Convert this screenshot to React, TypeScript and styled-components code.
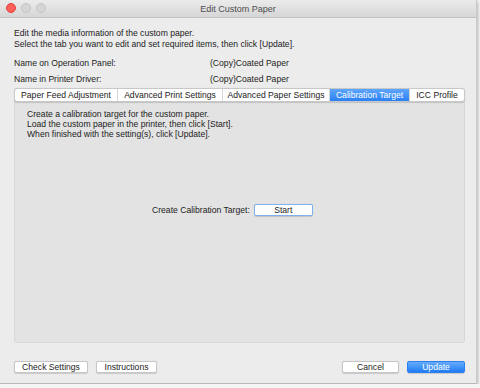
import styled, { createGlobalStyle } from 'styled-components';

const GlobalStyle = createGlobalStyle`
  html, body {
    margin: 0;
    padding: 0;
    background: #f4f4f4;
  }
  body {
    font-family: "Liberation Sans", Arial, sans-serif;
    font-size: 8.6px;
    color: #222;
  }
`;

const tabs = [
  { label: 'Paper Feed Adjustment', width: 102 },
  { label: 'Advanced Print Settings', width: 105 },
  { label: 'Advanced Paper Settings', width: 107 },
  { label: 'Calibration Target', width: 80 },
  { label: 'ICC Profile', width: 55 },
];

export default function App() {
  return (
    <>
      <GlobalStyle />
      <Window>
        <TitleBar>
          <Lights>
            <Light $color="#fc5f57" $border="#e0443e" />
            <Light $color="#d5d5d5" $border="#c4c4c4" />
            <Light $color="#d5d5d5" $border="#c4c4c4" />
          </Lights>
          <Title>Edit Custom Paper</Title>
        </TitleBar>
        <Body>
          <Intro>
            <div>Edit the media information of the custom paper.</div>
            <div>
              Select the tab you want to edit and set required items, then
              click [Update].
            </div>
          </Intro>
          <NameGrid>
            <span>Name on Operation Panel:</span>
            <span>(Copy)Coated Paper</span>
            <span>Name in Printer Driver:</span>
            <span>(Copy)Coated Paper</span>
          </NameGrid>
          <TabArea>
            <TabBar>
              {tabs.map((t) => (
                <Tab
                  key={t.label}
                  $width={t.width}
                  $active={t.label === 'Calibration Target'}
                >
                  {t.label}
                </Tab>
              ))}
            </TabBar>
            <Panel>
              <PanelText>
                <div>Create a calibration target for the custom paper.</div>
                <div>
                  Load the custom paper in the printer, then click [Start].
                </div>
                <div>When finished with the setting(s), click [Update].</div>
              </PanelText>
              <StartRow>
                <span>Create Calibration Target:</span>
                <Button $focus $width={59}>
                  Start
                </Button>
              </StartRow>
            </Panel>
          </TabArea>
          <Footer>
            <ButtonGroup>
              <Button $width={74}>Check Settings</Button>
              <Button $width={61}>Instructions</Button>
            </ButtonGroup>
            <ButtonGroup>
              <Button $width={57}>Cancel</Button>
              <Button $primary $width={58}>
                Update
              </Button>
            </ButtonGroup>
          </Footer>
        </Body>
      </Window>
    </>
  );
}

const Window = styled.div`
  width: 477px;
  height: 384px;
  background: #ececec;
  border-right: 1px solid #c9c9c9;
  border-bottom: 1px solid #b9b9b9;
  box-shadow: 1px 2px 3px rgba(0, 0, 0, 0.25);
  display: flex;
  flex-direction: column;
  box-sizing: border-box;
`;

const TitleBar = styled.div`
  height: 17px;
  position: relative;
  display: flex;
  align-items: center;
  justify-content: center;
  background: linear-gradient(#ebebeb, #d6d6d6);
  border-bottom: 1px solid #c2c2c2;
  flex-shrink: 0;
`;

const Lights = styled.div`
  position: absolute;
  left: 6px;
  top: 3px;
  display: flex;
  gap: 5px;
`;

const Light = styled.div<{ $color: string; $border: string }>`
  width: 8px;
  height: 8px;
  border-radius: 50%;
  background: ${({ $color }) => $color};
  border: 0.5px solid ${({ $border }) => $border};
`;

const Title = styled.div`
  font-size: 9px;
  color: #4d4d4d;
`;

const Body = styled.div`
  flex: 1;
  display: flex;
  flex-direction: column;
  padding: 10px 11px 0 14px;
`;

const Intro = styled.div`
  line-height: 11px;
`;

const NameGrid = styled.div`
  margin-top: 8px;
  display: grid;
  grid-template-columns: 196px 1fr;
  row-gap: 5px;
  line-height: 11px;
`;

const TabArea = styled.div`
  margin-top: 3px;
  display: flex;
  flex-direction: column;
  align-items: center;
  width: 451px;
`;

const TabBar = styled.div`
  display: flex;
  height: 14px;
  box-sizing: border-box;
  background: #fff;
  border: 1px solid #c8c8c8;
  border-radius: 3px;
  box-shadow: 0 0.5px 1px rgba(0, 0, 0, 0.15);
  overflow: hidden;
  position: relative;
  z-index: 1;
`;

const Tab = styled.div<{ $active?: boolean; $width: number }>`
  width: ${({ $width }) => $width}px;
  box-sizing: border-box;
  display: flex;
  align-items: center;
  justify-content: center;
  line-height: 12px;
  white-space: nowrap;
  color: ${({ $active }) => ($active ? '#fff' : '#222')};
  background: ${({ $active }) =>
    $active ? 'linear-gradient(#5fa6fa, #2a80f4)' : 'transparent'};
  & + & {
    border-left: 1px solid #d6d6d6;
  }
`;

const Panel = styled.div`
  margin-top: -7px;
  width: 100%;
  height: 248px;
  box-sizing: border-box;
  background: #e3e3e3;
  border: 1px solid #d7d7d7;
  border-radius: 3px;
  padding: 13px 12px 0;
  display: flex;
  flex-direction: column;
`;

const PanelText = styled.div`
  line-height: 10px;
`;

const StartRow = styled.div`
  margin-top: 65px;
  display: flex;
  align-items: center;
  gap: 4px;
  padding-left: 125px;
`;

const Button = styled.div<{
  $primary?: boolean;
  $focus?: boolean;
  $width: number;
}>`
  width: ${({ $width }) => $width}px;
  height: 12px;
  box-sizing: border-box;
  display: flex;
  align-items: center;
  justify-content: center;
  border-radius: 2px;
  line-height: 10px;
  color: ${({ $primary }) => ($primary ? '#fff' : '#222')};
  background: ${({ $primary }) =>
    $primary ? 'linear-gradient(#67acfa, #1f7cf4)' : '#fff'};
  border: ${({ $primary, $focus }) =>
    $primary
      ? '0.5px solid #2d7ff0'
      : $focus
      ? '1.5px solid #7fb1ee'
      : '0.5px solid #c6c6c6'};
  box-shadow: 0 0.5px 1px rgba(0, 0, 0, 0.15);
`;

const Footer = styled.div`
  margin-top: 18px;
  display: flex;
  justify-content: space-between;
  width: 451px;
`;

const ButtonGroup = styled.div`
  display: flex;
  gap: 8px;
`;
